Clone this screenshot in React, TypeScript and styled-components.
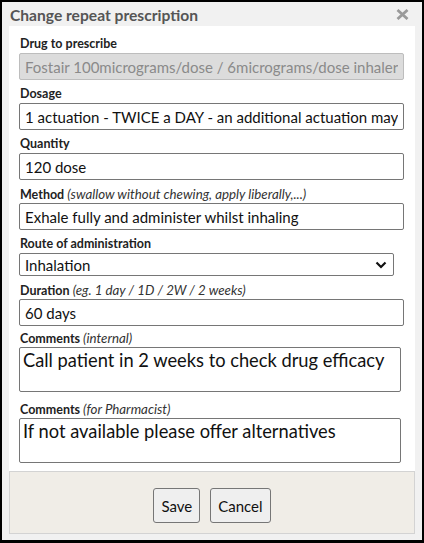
import styled, { createGlobalStyle } from 'styled-components';

const GlobalStyle = createGlobalStyle`
  html, body {
    margin: 0;
    padding: 0;
    background: #ffffff;
  }
  * {
    box-sizing: border-box;
  }
`;

const FONT = `Lato, "Open Sans", "Liberation Sans", sans-serif`;

export default function App() {
  return (
    <>
      <GlobalStyle />
      <Dialog>
        <TitleBar>
          <Title>Change repeat prescription</Title>
          <CloseButton aria-label="close">
            <svg width="13" height="11" viewBox="0 0 13 11">
              <path d="M1.5 1 L11.5 10 M11.5 1 L1.5 10" stroke="#9a9a9a" strokeWidth="2.8" />
            </svg>
          </CloseButton>
        </TitleBar>
        <Body>
          <Field>
            <Label>Drug to prescribe</Label>
            <TextInput
              disabled
              defaultValue="Fostair 100micrograms/dose / 6micrograms/dose inhaler"
            />
          </Field>
          <Field>
            <Label>Dosage</Label>
            <TextInput defaultValue="1 actuation - TWICE a DAY - an additional actuation may be taken if required" />
          </Field>
          <Field>
            <Label>Quantity</Label>
            <TextInput defaultValue="120 dose" />
          </Field>
          <Field>
            <Label>
              Method <Hint>(swallow without chewing, apply liberally,...)</Hint>
            </Label>
            <TextInput defaultValue="Exhale fully and administer whilst inhaling" />
          </Field>
          <Field>
            <Label>Route of administration</Label>
            <SelectWrap>
              <Select defaultValue="Inhalation">
                <option>Inhalation</option>
                <option>Oral</option>
                <option>Topical</option>
              </Select>
              <Chevron width="12" height="8" viewBox="0 0 12 8">
                <path d="M1.5 1.5 L6 6 L10.5 1.5" fill="none" stroke="#111" strokeWidth="2.2" />
              </Chevron>
            </SelectWrap>
          </Field>
          <Field>
            <Label>
              Duration <Hint>(eg. 1 day / 1D / 2W / 2 weeks)</Hint>
            </Label>
            <TextInput defaultValue="60 days" />
          </Field>
          <Field $gap={4}>
            <Label>
              Comments <Hint>(internal)</Hint>
            </Label>
            <TextArea defaultValue="Call patient in 2 weeks to check drug efficacy" />
          </Field>
          <Field $gap={9}>
            <Label>
              Comments <Hint>(for Pharmacist)</Hint>
            </Label>
            <TextArea defaultValue="If not available please offer alternatives" />
          </Field>
        </Body>
        <Footer>
          <Button>Save</Button>
          <Button>Cancel</Button>
        </Footer>
      </Dialog>
    </>
  );
}

const Dialog = styled.div`
  width: 424px;
  height: 543px;
  border: 2px solid #000;
  border-bottom-width: 3px;
  background-color: #f1f1f1;
  padding: 0 7px 6px 7px;
  display: flex;
  flex-direction: column;
  font-family: ${FONT};

  & > * {
    flex-shrink: 0;
  }
`;

const TitleBar = styled.div`
  height: 24px;
  display: flex;
  align-items: center;
  justify-content: space-between;
  padding: 1px 6px 0 1px;
`;

const Title = styled.h1`
  margin: 0;
  font-size: 15.6px;
  font-weight: 700;
  color: #555;
`;

const CloseButton = styled.span`
  display: flex;
  align-items: center;
`;

const Body = styled.div`
  background-color: #fff;
  padding: 10px 10px 8px 10px;
`;

const Field = styled.div<{ $gap?: number }>`
  margin-top: ${(p) => p.$gap ?? 6}px;
  &:first-child {
    margin-top: 0;
  }
`;

const Label = styled.label`
  display: block;
  height: 16px;
  font-size: 12.5px;
  line-height: 16px;
  font-weight: 700;
  color: #222;
  margin: 0 0 1px 1px;
  white-space: nowrap;
`;

const Hint = styled.i`
  font-size: 13.3px;
  line-height: 16px;
  font-weight: 400;
  color: #333;
`;

const TextInput = styled.input`
  display: block;
  width: 385px;
  height: 27px;
  padding: 0 5px;
  border: 1px solid #767676;
  border-radius: 2px;
  font-family: ${FONT};
  font-size: 15px;
  color: #111;
  background: #fff;
  outline: none;

  &:disabled {
    background: #dcdcdc;
    border-color: #bdbdbd;
    color: #8a8a8a;
  }
`;

const SelectWrap = styled.div`
  position: relative;
  width: 375px;
`;

const Select = styled.select`
  display: block;
  width: 375px;
  height: 23px;
  padding: 0 24px 0 5px;
  border: 1px solid #767676;
  border-radius: 2px;
  font-family: ${FONT};
  font-size: 15px;
  color: #111;
  background: #fff;
  appearance: none;
  outline: none;
`;

const Chevron = styled.svg`
  position: absolute;
  right: 7px;
  top: 8px;
  pointer-events: none;
`;

const TextArea = styled.textarea`
  display: block;
  width: 382px;
  height: 45px;
  padding: 1px 3px;
  border: 1px solid #767676;
  border-radius: 2px;
  font-family: ${FONT};
  font-size: 18.3px;
  line-height: 22px;
  color: #111;
  resize: none;
  outline: none;
`;

const Footer = styled.div`
  height: 63px;
  border: 1px solid #d3d3d3;
  background-color: #f0ede7;
  display: flex;
  justify-content: center;
  align-items: flex-start;
  gap: 10px;
  padding-top: 16px;
`;

const Button = styled.button`
  height: 35px;
  padding: 0 7px;
  border: 1px solid #767676;
  border-radius: 3px;
  background-color: #efefef;
  font-family: ${FONT};
  font-size: 15px;
  color: #111;
`;
